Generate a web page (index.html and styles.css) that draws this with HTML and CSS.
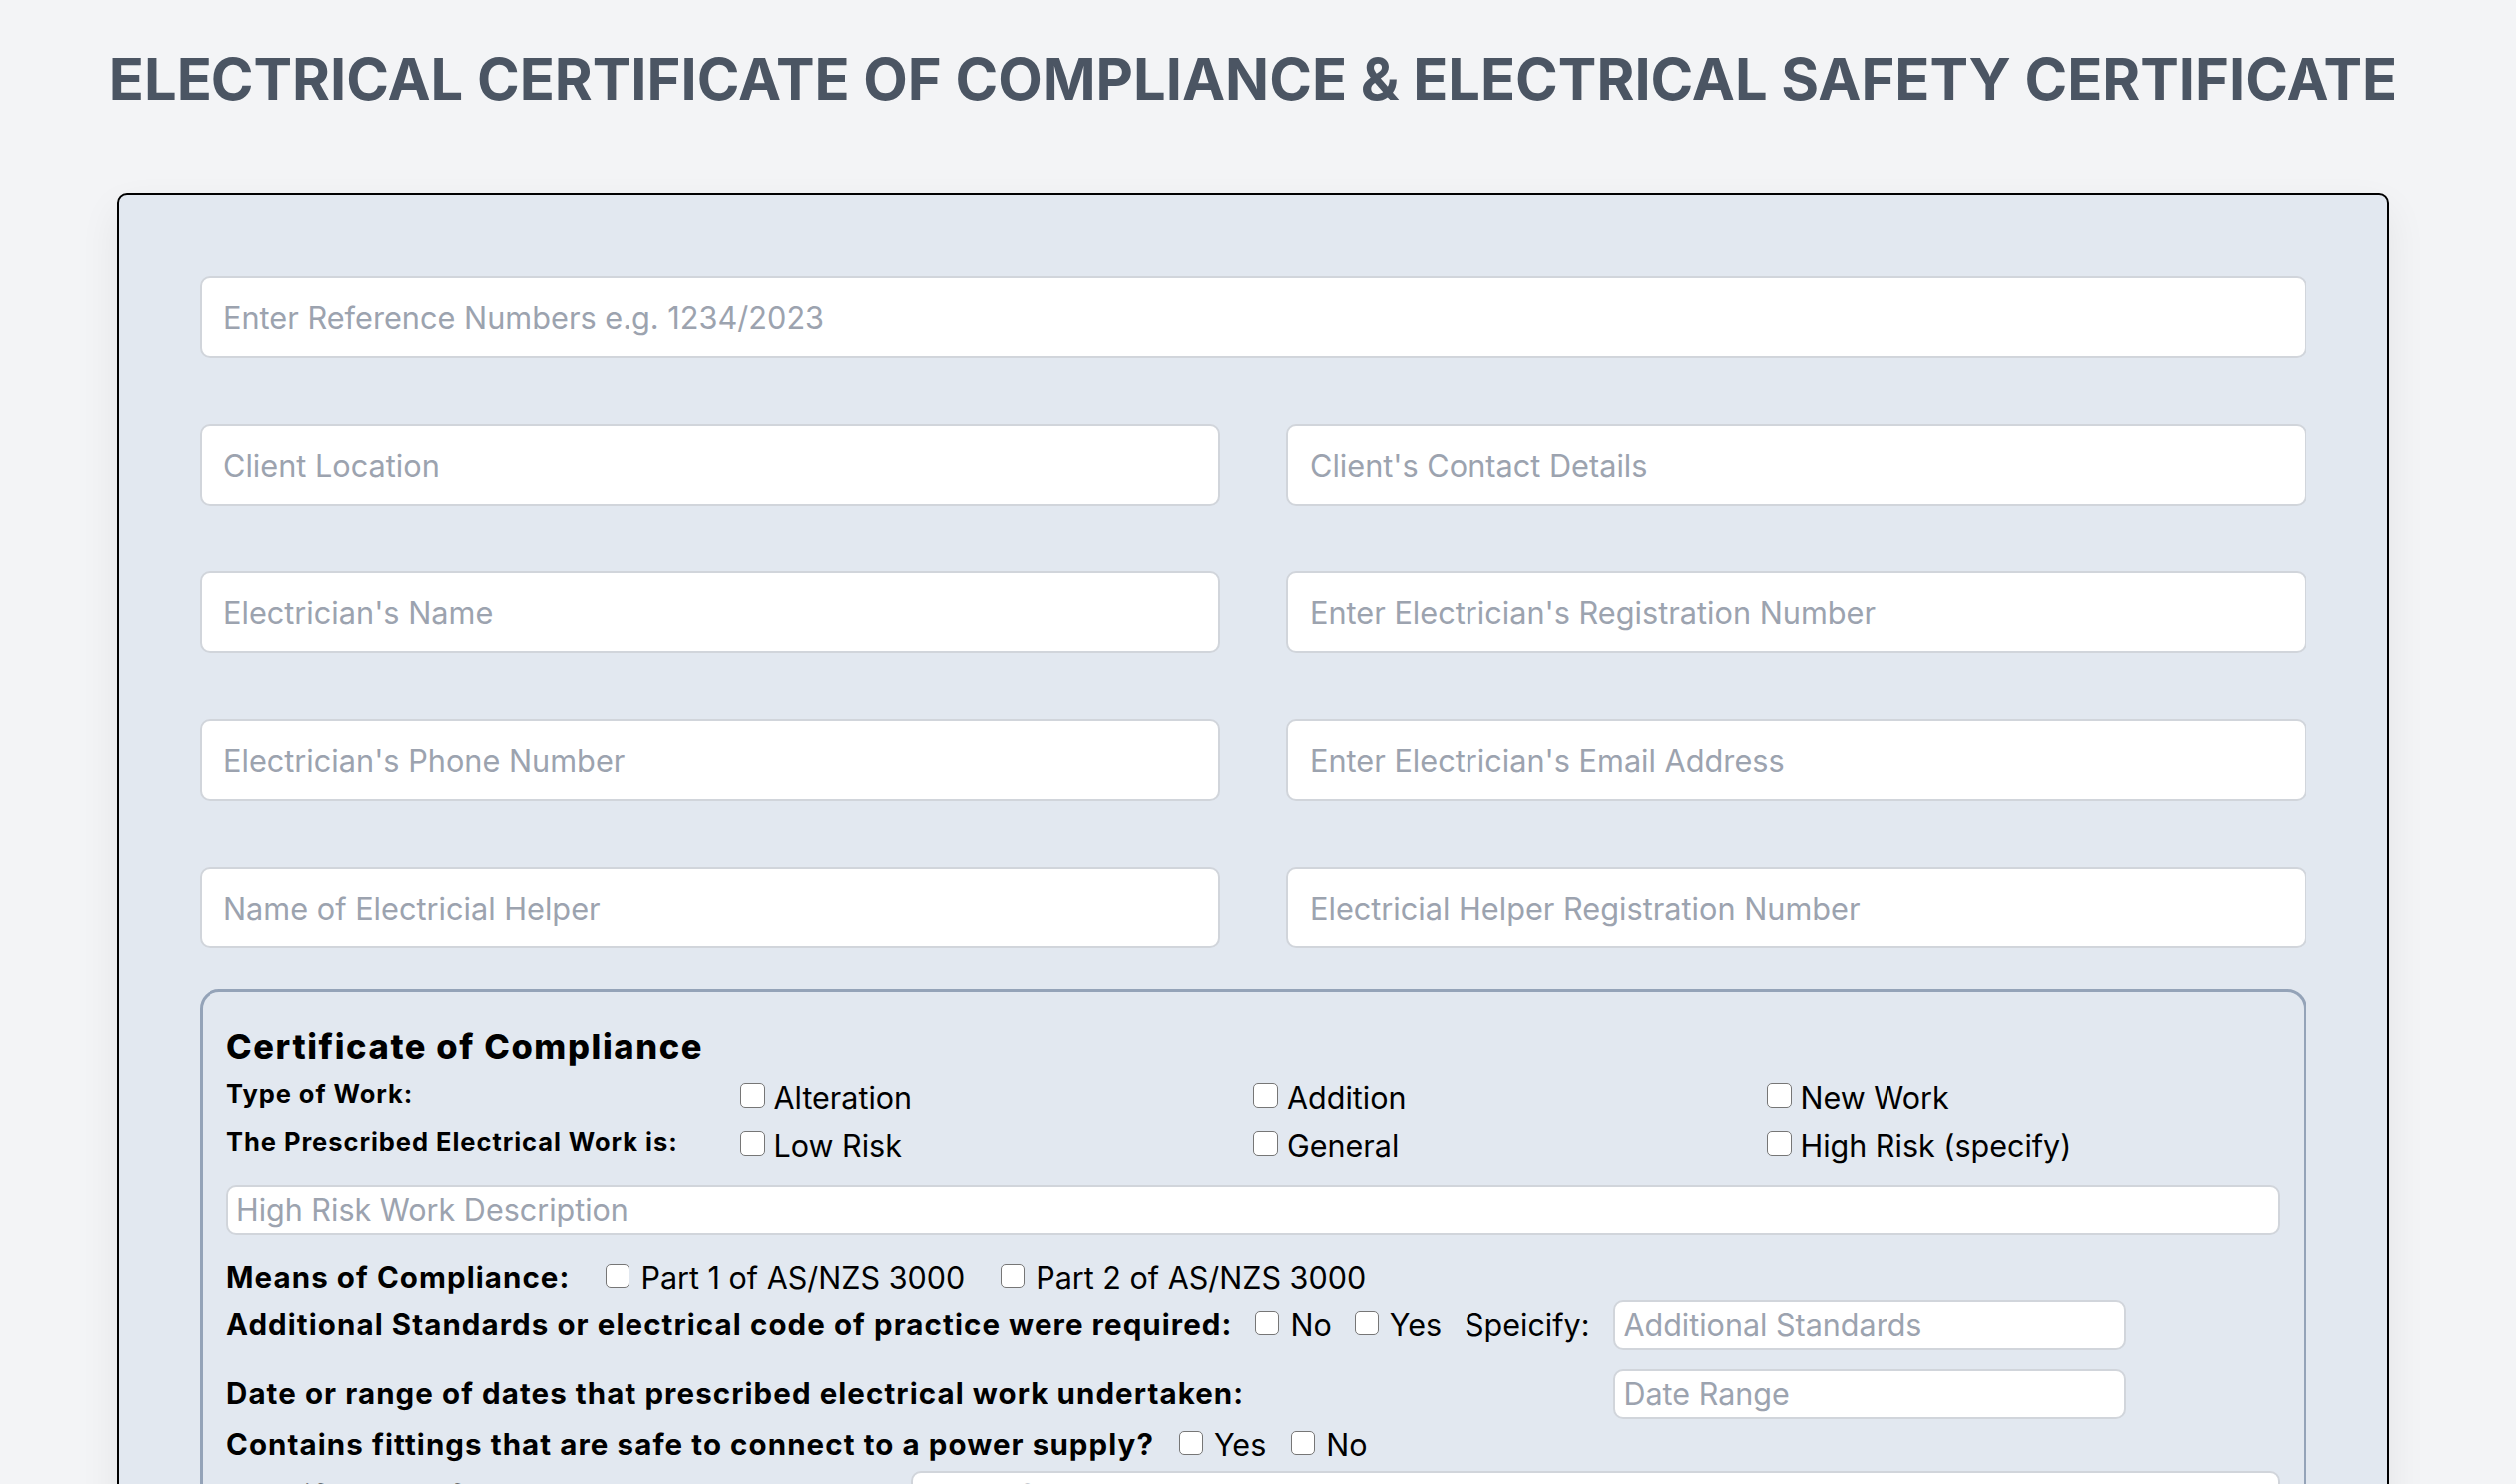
FILE: index.html
```html
<!DOCTYPE html>
<html lang="en">
<head>
<meta charset="utf-8">
<title>Electrical Certificate</title>
<link rel="stylesheet" href="styles.css">
</head>
<body>
<h1 class="page-title">ELECTRICAL CERTIFICATE OF COMPLIANCE &amp; ELECTRICAL SAFETY CERTIFICATE</h1>
<form class="card">
  <input class="field" type="text" placeholder="Enter Reference Numbers e.g. 1234/2023">
  <div class="field-grid">
    <input class="field" type="text" placeholder="Client Location">
    <input class="field" type="text" placeholder="Client's Contact Details">
    <input class="field" type="text" placeholder="Electrician's Name">
    <input class="field" type="text" placeholder="Enter Electrician's Registration Number">
    <input class="field" type="text" placeholder="Electrician's Phone Number">
    <input class="field" type="text" placeholder="Enter Electrician's Email Address">
    <input class="field" type="text" placeholder="Name of Electricial Helper">
    <input class="field" type="text" placeholder="Electricial Helper Registration Number">
  </div>
  <section class="coc">
    <h2 class="coc-title">Certificate of Compliance</h2>
    <div class="coc-grid">
      <span class="coc-label">Type of Work:</span>
      <label class="check"><input type="checkbox"><span>Alteration</span></label>
      <label class="check"><input type="checkbox"><span>Addition</span></label>
      <label class="check"><input type="checkbox"><span>New Work</span></label>
      <span class="coc-label">The Prescribed Electrical Work is:</span>
      <label class="check"><input type="checkbox"><span>Low Risk</span></label>
      <label class="check"><input type="checkbox"><span>General</span></label>
      <label class="check"><input type="checkbox"><span>High Risk (specify)</span></label>
    </div>
    <input class="small-field wide" type="text" placeholder="High Risk Work Description">
    <div class="line line-means">
      <span class="line-label">Means of Compliance:</span>
      <label class="check-sm"><input type="checkbox"><span>Part 1 of AS/NZS 3000</span></label>
      <label class="check-sm"><input type="checkbox"><span>Part 2 of AS/NZS 3000</span></label>
    </div>
    <div class="pair-grid">
      <div class="line line-addl">
        <span class="line-label">Additional Standards or electrical code of practice were required:</span>
        <label class="check-sm"><input type="checkbox"><span>No</span></label>
        <label class="check-sm"><input type="checkbox"><span>Yes</span></label>
        <span class="line-text">Speicify:</span>
      </div>
      <input class="small-field" type="text" placeholder="Additional Standards">
      <div class="line">
        <span class="line-label">Date or range of dates that prescribed electrical work undertaken:</span>
      </div>
      <input class="small-field" type="text" placeholder="Date Range">
    </div>
    <div class="line line-contains">
      <span class="line-label">Contains fittings that are safe to connect to a power supply?</span>
      <label class="check-sm"><input type="checkbox"><span>Yes</span></label>
      <label class="check-sm"><input type="checkbox"><span>No</span></label>
    </div>
    <div class="supply-row">
      <span class="line-label">Specify type of supply system:</span>
      <input class="small-field" type="text" placeholder="Type of Supply?">
    </div>
    <div class="line">
      <span class="line-label">Earthing system:</span>
      <label class="check-sm"><input type="checkbox"><span>MEN</span></label>
      <label class="check-sm"><input type="checkbox"><span>Other</span></label>
    </div>
  </section>
</form>
</body>
</html>
```

FILE: styles.css
```css
* { box-sizing: border-box; }
html, body { margin: 0; padding: 0; }
body {
  background: #f3f4f6;
  font-family: "Inter", "Liberation Sans", sans-serif;
  color: #000;
  padding: 0 10px 120px 0;
}
.page-title {
  margin: 43px 0 0;
  text-align: center;
  font-size: 57.8px;
  line-height: 72px;
  font-weight: 700;
  color: #4b5563;
}
.card {
  width: 2278px;
  margin: 79px auto 0;
  background: #e2e8f0;
  border: 2px solid #000;
  border-radius: 10px;
  padding: 81px 81px 81px;
  box-shadow: 0 16px 40px rgba(0,0,0,0.07);
}
.field {
  display: block;
  width: 100%;
  height: 82px;
  border: 2px solid #d1d5db;
  border-radius: 10px;
  background: #fff;
  padding: 0 22px;
  font: 400 30.7px "Inter", sans-serif;
  color: #111;
  outline: none;
}
.field::placeholder, .small-field::placeholder { color: #9ca3af; opacity: 1; }
.field-grid {
  margin-top: 66px;
  display: grid;
  grid-template-columns: 1fr 1fr;
  gap: 66px;
}
.coc {
  margin-top: 41px;
  border: 3px solid #94a3b8;
  border-radius: 20px;
  padding: 35px 24px 40px;
}
.coc-title {
  margin: 0;
  font-size: 34.5px;
  line-height: 40px;
  font-weight: 800;
  letter-spacing: 1.6px;
}
.coc-grid {
  margin-top: 9px;
  display: grid;
  grid-template-columns: repeat(4, 1fr);
  grid-auto-rows: 48px;
  align-items: start;
}
.coc-label {
  font-size: 25.5px;
  line-height: 36px;
  font-weight: 700;
  letter-spacing: 0.95px;
}
.check, .check-sm {
  display: flex;
  align-items: center;
  font-weight: 400;
  white-space: nowrap;
  flex: none;
}
.check { font-size: 30.5px; line-height: 43px; gap: 9px; }
.check input, .check-sm input {
  appearance: none;
  -webkit-appearance: none;
  margin: 0;
  flex: none;
  background: #fff;
  border: 1.6px solid #767676;
}
.check input { width: 25px; height: 25px; border-radius: 5px; margin-top: -4px; }
.check-sm input { width: 24px; height: 24px; border-radius: 5px; margin-top: -3px; }
.small-field {
  display: block;
  width: 100%;
  height: 50px;
  border: 2px solid #d1d5db;
  border-radius: 10px;
  background: #fff;
  padding: 0 8px;
  font: 400 30.5px "Inter", sans-serif;
  outline: none;
}
.wide { margin-top: 12.6px; }
.line {
  display: flex;
  align-items: center;
  min-height: 43px;
  line-height: 43px;
  font-size: 30.5px;
  gap: 25px;
  white-space: nowrap;
}
.line-means { margin-top: 21px; gap: 36px; }
.line-addl { gap: 23px; }
.line-contains { margin-top: 4px; }
.check-sm { gap: 11px; }
.line-label {
  font-weight: 700;
  font-size: 29.5px;
  letter-spacing: 1.08px;
  white-space: nowrap;
  flex: none;
}
.line-text { flex: none; }
.pair-grid {
  margin-top: 2px;
  display: grid;
  grid-template-columns: auto 514px;
  justify-content: start;
  column-gap: 24px;
  row-gap: 19px;
  align-items: center;
}
.supply-row {
  margin-top: 5px;
  display: grid;
  grid-template-columns: 662px 1fr;
  column-gap: 24px;
  align-items: center;
  font-size: 30.5px;
  line-height: 43px;
}
```
